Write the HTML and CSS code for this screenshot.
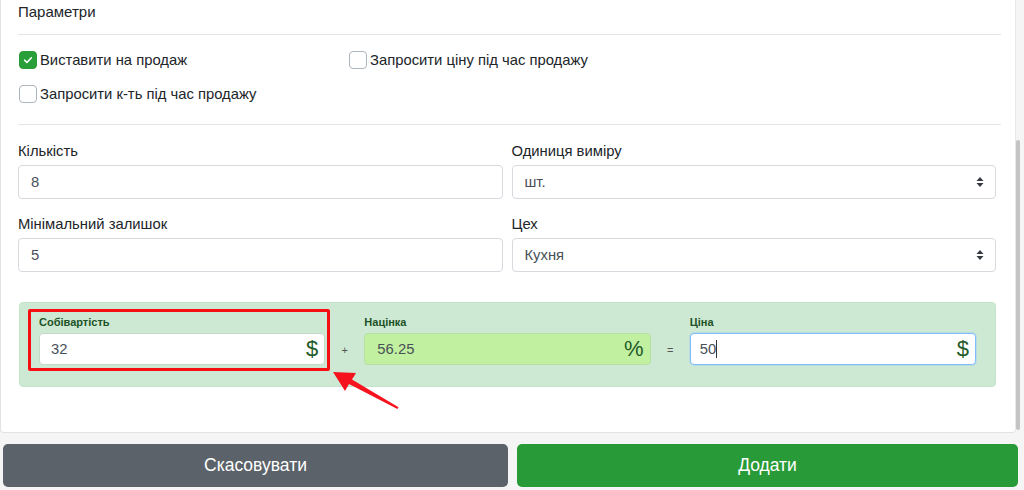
FILE: index.html
```html
<!DOCTYPE html>
<html lang="uk">
<head>
<meta charset="utf-8">
<title>Параметри</title>
<link rel="stylesheet" href="styles.css">
</head>
<body>
<div class="frame">
  <div class="card">
    <div class="section-title">Параметри</div>
    <div class="rule"></div>
    <div class="checks">
      <div class="check"><span class="box checked"><svg viewBox="0 0 16 16" width="12" height="12"><path d="M3.5 8.3l3 3 6-6.3" fill="none" stroke="#fff" stroke-width="2.2" stroke-linecap="round" stroke-linejoin="round"/></svg></span>Виставити на продаж</div>
      <div class="check"><span class="box"></span>Запросити ціну під час продажу</div>
      <div class="check"></div>
      <div class="check"><span class="box"></span>Запросити к-ть під час продажу</div>
    </div>
    <div class="rule"></div>
    <div class="fields">
      <div class="field">
        <div class="label">Кількість</div>
        <div class="control">8</div>
      </div>
      <div class="field">
        <div class="label">Одиниця виміру</div>
        <div class="control select">шт.<svg class="arrows" viewBox="0 0 8 12" width="8" height="12"><path d="M4 1L7.5 5H0.5Z M4 11L7.5 7H0.5Z" fill="#343a40"/></svg></div>
      </div>
      <div class="field">
        <div class="label">Мінімальний залишок</div>
        <div class="control">5</div>
      </div>
      <div class="field">
        <div class="label">Цех</div>
        <div class="control select">Кухня<svg class="arrows" viewBox="0 0 8 12" width="8" height="12"><path d="M4 1L7.5 5H0.5Z M4 11L7.5 7H0.5Z" fill="#343a40"/></svg></div>
      </div>
    </div>
    <div class="price-panel">
      <div class="pgroup highlighted">
        <div class="plabel">Собівартість</div>
        <div class="pcontrol"><span>32</span><span class="unit">$</span></div>
        <div class="redbox"></div>
      </div>
      <div class="op">+</div>
      <div class="pgroup">
        <div class="plabel">Націнка</div>
        <div class="pcontrol markup"><span>56.25</span><span class="unit">%</span></div>
      </div>
      <div class="op">=</div>
      <div class="pgroup">
        <div class="plabel">Ціна</div>
        <div class="pcontrol focused"><span>50<span class="caret"></span></span><span class="unit">$</span></div>
      </div>
    </div>
    <svg class="arrow" viewBox="0 0 90 55" width="90" height="55"><polygon points="13,12 36,13 32,19.5 78.6,47.2 77.4,49 29,24 25,31" fill="#f5141e"/></svg>
  </div>
  <div class="scrollbar"><div class="thumb"></div></div>
</div>
<div class="actions">
  <button class="btn cancel">Скасовувати</button>
  <button class="btn add">Додати</button>
</div>
</body>
</html>
```
FILE: styles.css
```css
* { box-sizing: border-box; }
html, body { margin: 0; padding: 0; }
body {
  background: #f5f5f5;
  font-family: "Liberation Sans", Arial, sans-serif;
  font-size: 14px;
  color: #212529;
  width: 1024px;
  height: 490px;
  overflow: hidden;
}
.frame {
  display: flex;
  height: 433px;
  margin-right: 4px;
}
.card {
  position: relative;
  flex: 1;
  background: #fff;
  border-left: 1px solid #e3e3e3;
  border-bottom: 1px solid #e3e3e3;
  border-right: 1px solid #e8e8e8;
  border-radius: 0 0 4px 4px;
  padding: 2px 14px 0 17px;
}
.scrollbar {
  width: 4px;
  background: #f5f5f5;
  display: flex;
  flex-direction: column;
}
.thumb {
  margin-top: 140px;
  height: 290px;
  background: #c4c4c4;
  border-radius: 2px;
}
.section-title {
  font-size: 15px;
  line-height: 20px;
  height: 20px;
}
.rule {
  height: 1px;
  background: #e5e5e5;
  margin-top: 12px;
}
.checks {
  display: grid;
  grid-template-columns: 330px 330px 1fr;
  row-gap: 9px;
  padding: 12px 0 18px;
}
.check {
  display: flex;
  align-items: center;
  height: 25px;
  font-size: 14.8px;
  white-space: nowrap;
}
.box {
  width: 18px;
  height: 18px;
  border: 1px solid #adb5bd;
  border-radius: 4px;
  background: #fff;
  margin: 0 3px 0 1px;
  display: flex;
  align-items: center;
  justify-content: center;
}
.box.checked {
  background: #289f38;
  border-color: #289f38;
}
.checks + .rule { margin-top: 0; }
.fields {
  display: grid;
  grid-template-columns: 1fr 1fr;
  column-gap: 9px;
  row-gap: 0;
  margin-right: 5px;
  padding-top: 16px;
}
.field { display: flex; flex-direction: column; }
.label {
  font-size: 14.8px;
  line-height: 20px;
  height: 20px;
  margin-bottom: 4px;
}
.control {
  height: 34px;
  border: 1px solid #d6d9dd;
  border-radius: 4px;
  padding: 0 12px;
  display: flex;
  align-items: center;
  font-size: 14.8px;
  color: #495057;
  margin-bottom: 15px;
}
.select { justify-content: space-between; }
.arrows { margin-right: -1px; }
.price-panel {
  display: flex;
  align-items: flex-start;
  margin: 15px 5px 0 1px;
  background: #cde9d3;
  border: 1px solid #c3e6cb;
  border-radius: 4px;
  padding: 13px 19px 21px 19px;
}
.pgroup {
  position: relative;
  flex: 1;
  display: flex;
  flex-direction: column;
}
.plabel {
  font-size: 11px;
  font-weight: bold;
  color: #1d5227;
  line-height: 13px;
  height: 13px;
  margin-bottom: 4px;
}
.pcontrol {
  position: relative;
  height: 32px;
  background: #fff;
  border: 1px solid #c6d8c9;
  border-radius: 4px;
  padding: 0 6px 0 11px;
  display: flex;
  align-items: center;
  justify-content: space-between;
  font-size: 14.8px;
  color: #495057;
}
.pcontrol.markup { background: #c1f0a0; border-color: #b8dfa2; padding-left: 12px; }
.pcontrol.focused { border-color: #80bdff; box-shadow: 0 0 0 1px rgba(128,189,255,0.25); padding-left: 9px; }
.unit {
  font-size: 22px;
  color: #1f5a2a;
  line-height: 1;
}
.caret {
  display: inline-block;
  width: 1px;
  height: 18px;
  background: #333;
  vertical-align: -4px;
}
.op {
  width: 39px;
  text-align: center;
  font-size: 11px;
  color: #555;
  padding-top: 28px;
}
.redbox {
  position: absolute;
  left: -11px;
  top: -7px;
  right: -5px;
  bottom: -6px;
  border: 3px solid #f50f14;
  border-radius: 2px;
  pointer-events: none;
}
.arrow {
  position: absolute;
  left: 319px;
  top: 360px;
}
.actions {
  display: flex;
  gap: 9px;
  padding: 11px 6px 0 3px;
}
.btn {
  height: 43px;
  border: none;
  border-radius: 5px;
  color: #fff;
  font-family: "Liberation Sans", Arial, sans-serif;
  font-size: 17.5px;
}
.cancel { flex: 0 0 505px; background: #5b6269; }
.add { flex: 1; background: #289b38; }
```
